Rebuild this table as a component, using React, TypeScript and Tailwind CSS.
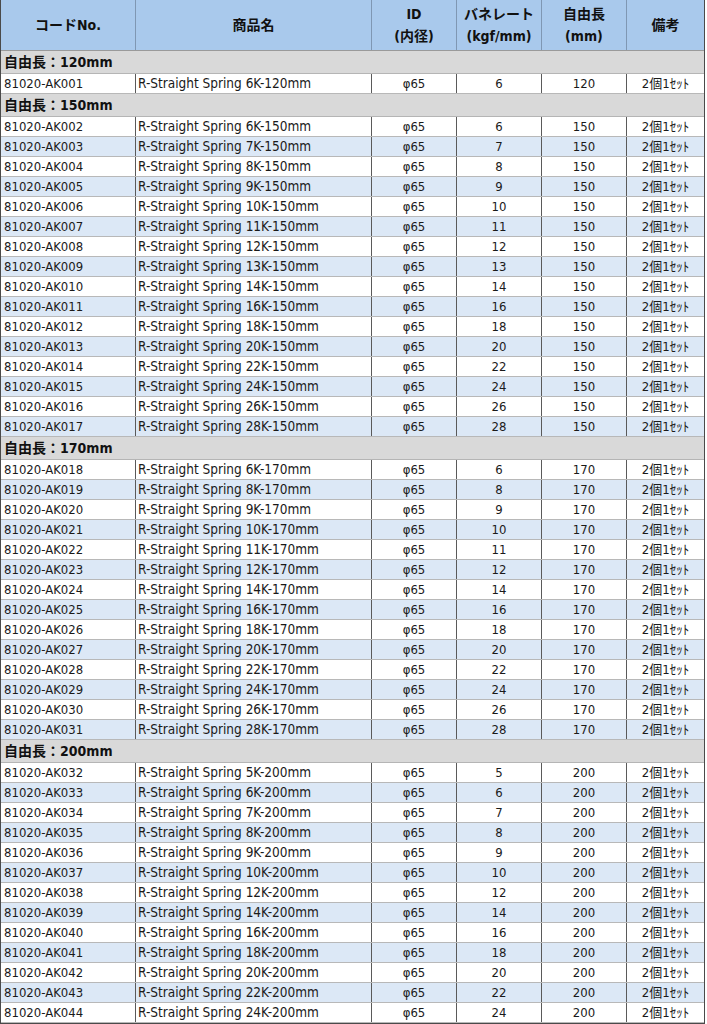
import React from "react";

type Row = { code: string; name: string; rate: number; len: number };
type Section = { len: number; rows: Row[] };

const specs: [number, number[]][] = [
  [120, [6]],
  [150, [6, 7, 8, 9, 10, 11, 12, 13, 14, 16, 18, 20, 22, 24, 26, 28]],
  [170, [6, 8, 9, 10, 11, 12, 14, 16, 18, 20, 22, 24, 26, 28]],
  [200, [5, 6, 7, 8, 9, 10, 12, 14, 16, 18, 20, 22, 24]],
];

let counter = 1;
const sections: Section[] = specs.map(([len, rates]) => ({
  len,
  rows: rates.map((r) => {
    const code = "81020-AK" + String(counter++).padStart(3, "0");
    return { code, name: `R-Straight Spring ${r}K-${len}mm`, rate: r, len };
  }),
}));

const FONT = {
  fontFamily:
    "'DejaVu Sans Condensed','DejaVu Sans','Noto Sans CJK JP',sans-serif",
};

const cols = "grid grid-cols-[135px_236px_85px_85px_85px_77px]";

export default function App() {
  return (
    <div className="bg-white w-[707px] h-[1024px] overflow-hidden" style={FONT}>
      <div className="w-[705px] border-l border-r border-b border-[#4a4a4a] font-stretch-condensed text-[#1a1a1a]">
        {/* Header */}
        <div className={`${cols} h-[51px] bg-[#a9c9ec] border-b border-[#9a9a9a] font-bold text-[14px] leading-[22px] text-[#111]`}>
          <div className="flex items-center justify-center border-r border-[#7f97b3]">コードNo.</div>
          <div className="flex items-center justify-center border-r border-[#7f97b3]">商品名</div>
          <div className="flex flex-col items-center justify-center border-r border-[#7f97b3]">
            <span>ID</span>
            <span>(内径)</span>
          </div>
          <div className="flex flex-col items-center justify-center border-r border-[#7f97b3]">
            <span>バネレート</span>
            <span>(kgf/mm)</span>
          </div>
          <div className="flex flex-col items-center justify-center border-r border-[#7f97b3]">
            <span>自由長</span>
            <span>(mm)</span>
          </div>
          <div className="flex items-center justify-center">備考</div>
        </div>

        {sections.map((s) => (
          <div key={s.len}>
            <div className="h-[23px] bg-[#d9d9d9] border-b border-[#b5b5b5] flex items-center pl-[3px] font-bold text-[14px] text-[#111]">
              自由長：{s.len}mm
            </div>
            {s.rows.map((r, i) => (
              <div
                key={r.code}
                className={`${cols} h-[20px] border-b border-[#b8b8b8] text-[13px] leading-[19px] ${
                  i % 2 === 1 ? "bg-[#dce8f6]" : "bg-white"
                }`}
              >
                <div className="pl-[3px] border-r border-[#5a5a5a] whitespace-nowrap">{r.code}</div>
                <div className="pl-[2px] border-r border-[#5a5a5a] whitespace-nowrap text-[13.5px]">{r.name}</div>
                <div className="text-center border-r border-[#5a5a5a]">φ65</div>
                <div className="text-center border-r border-[#5a5a5a]">{r.rate}</div>
                <div className="text-center border-r border-[#5a5a5a]">{r.len}</div>
                <div className="text-center whitespace-nowrap">2個1ｾｯﾄ</div>
              </div>
            ))}
          </div>
        ))}
      </div>
    </div>
  );
}
